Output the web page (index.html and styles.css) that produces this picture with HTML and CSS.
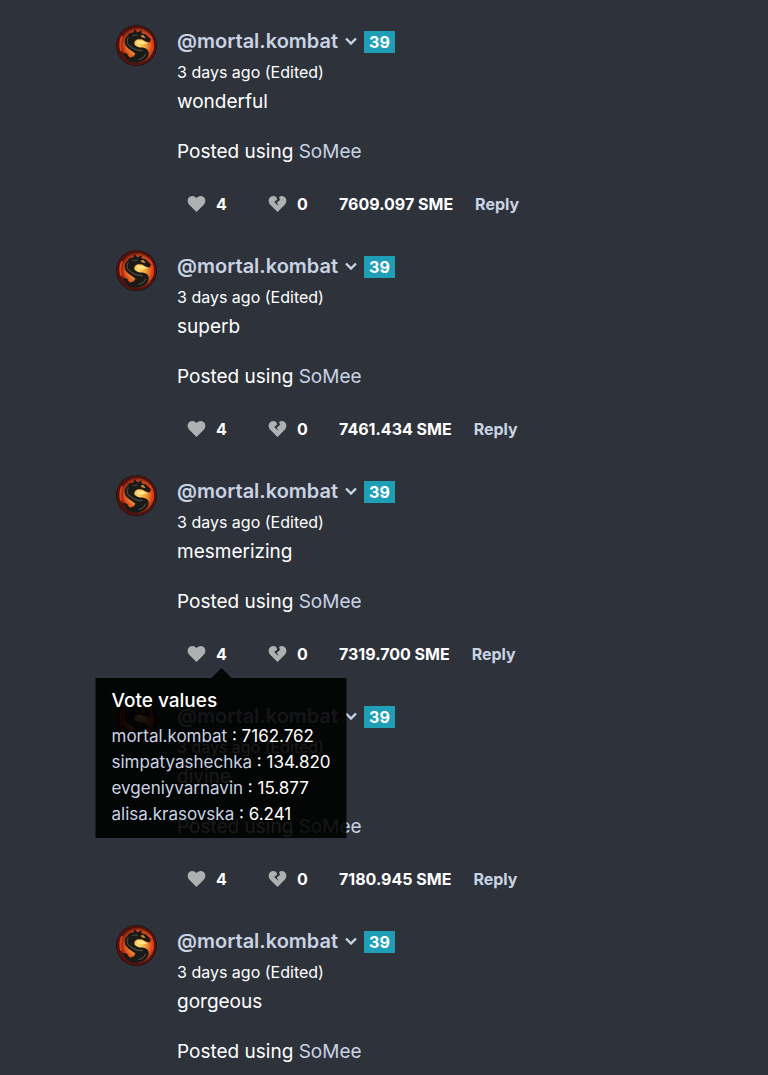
FILE: index.html
```
<!DOCTYPE html>
<html lang="en">
<head>
<meta charset="utf-8">
<meta name="viewport" content="width=device-width, initial-scale=1">
<title>Comments</title>
<link rel="stylesheet" href="styles.css">
</head>
<body>
<svg class="sprite" aria-hidden="true">
  <defs>
    <radialGradient id="fire" cx="55%" cy="50%" r="52%">
      <stop offset="0" stop-color="#ffdf70"/>
      <stop offset=".4" stop-color="#f4a03a"/>
      <stop offset=".75" stop-color="#d9481a"/>
      <stop offset="1" stop-color="#5a120c"/>
    </radialGradient>
  </defs>
  <symbol id="dragon" viewBox="0 0 40 40">
    <circle cx="20" cy="20" r="20" fill="#1f1215"/>
    <circle cx="20" cy="20" r="17.500" fill="url(#fire)"/>
    <circle cx="20" cy="20" r="18.500" fill="none" stroke="#5b130d" stroke-width="1.500"/>
    <path d="M6 11Q3 18 5 25M33 10Q38 18 35 26" fill="none" stroke="#df3b16" stroke-width="2"/>
    <path d="M9 13L13 8L17 7L18 4L21 7L25 5L25 8L29 9L34 14L33 17L29 16L25 14L21 14Q17 16 18 19Q20 22 26 22Q32 23 32 28Q31 34 24 36Q15 39 9 32L6 27Q11 27 13 30L17 31L19 28Q16 26 12 23Q7 19 9 13Z" fill="#191918"/>
    <path d="M20 15L26 15L31 18L25 19L21 18Z" fill="#ffe58a"/>
    <path d="M12 12Q9 18 14 21Q19 25 26 25M22 34Q28 32 29 28M16 10L21 10" fill="none" stroke="#514e3d" stroke-width="1"/>
    <path d="M11 29Q15 28 17 30L14 32Z" fill="#ef5b20"/>
    <path d="M24 10L27 10L29 13L25 12Z" fill="#d98b32"/>
  </symbol>
  <symbol id="heart" viewBox="0 0 18 16">
    <path d="M9 16L1.5 8.400C-.5 6.200-.2 2.700 1.900 1.100C4.100-.6 7-.2 9 2.100C11-.2 13.900-.6 16.100 1.100C18.200 2.700 18.500 6.200 16.500 8.400Z"/>
  </symbol>
  <symbol id="broken" viewBox="0 0 18 16">
    <path d="M9 16L1.500 8.400C-.5 6.200-.2 2.700 1.900 1.100C3.700-.3 6-.3 7.900 1.200L8.700 3.600L5.700 5.900L10 10L8.300 6.500L11.500 4.100L10.600 1C12.400-.4 14.500-.2 16.100 1.100C18.200 2.700 18.500 6.200 16.500 8.400Z"/>
  </symbol>
  <symbol id="chevron" viewBox="0 0 12 8">
    <path d="M1 1.500L6 6.500L11 1.500" fill="none" stroke="currentColor" stroke-width="2.400"/>
  </symbol>
</svg>
<main class="feed">
  <article class="comment">
    <svg class="avatar" role="img" aria-label="mortal.kombat"><use href="#dragon"/></svg>
    <div class="content">
      <header class="author"><a href="#">@mortal.kombat</a><button class="toggle" aria-label="Author menu"><svg><use href="#chevron"/></svg></button><span class="level">39</span></header>
      <div class="date">3 days ago <span class="edited">(Edited)</span></div>
      <p>wonderful</p>
      <p>Posted using <a href="#">SoMee</a></p>
      <footer class="actions">
        <div class="vote"><button aria-label="Like"><svg><use href="#heart"/></svg></button><span class="count">4</span></div>
        <div class="vote down"><button aria-label="Dislike"><svg><use href="#broken"/></svg></button><span class="count">0</span></div>
        <span class="reward">7609.097 SME</span><a href="#">Reply</a>
      </footer>
    </div>
  </article>
  <article class="comment">
    <svg class="avatar" role="img" aria-label="mortal.kombat"><use href="#dragon"/></svg>
    <div class="content">
      <header class="author"><a href="#">@mortal.kombat</a><button class="toggle" aria-label="Author menu"><svg><use href="#chevron"/></svg></button><span class="level">39</span></header>
      <div class="date">3 days ago <span class="edited">(Edited)</span></div>
      <p>superb</p>
      <p>Posted using <a href="#">SoMee</a></p>
      <footer class="actions">
        <div class="vote"><button aria-label="Like"><svg><use href="#heart"/></svg></button><span class="count">4</span></div>
        <div class="vote down"><button aria-label="Dislike"><svg><use href="#broken"/></svg></button><span class="count">0</span></div>
        <span class="reward">7461.434 SME</span><a href="#">Reply</a>
      </footer>
    </div>
  </article>
  <article class="comment">
    <svg class="avatar" role="img" aria-label="mortal.kombat"><use href="#dragon"/></svg>
    <div class="content">
      <header class="author"><a href="#">@mortal.kombat</a><button class="toggle" aria-label="Author menu"><svg><use href="#chevron"/></svg></button><span class="level">39</span></header>
      <div class="date">3 days ago <span class="edited">(Edited)</span></div>
      <p>mesmerizing</p>
      <p>Posted using <a href="#">SoMee</a></p>
      <footer class="actions">
        <div class="vote"><button aria-label="Like"><svg><use href="#heart"/></svg></button><span class="count">4</span>
          <div class="tooltip" role="tooltip">
            <h2>Vote values</h2>
            <ul>
              <li><a href="#">mortal.kombat</a> : 7162.762</li>
              <li><a href="#">simpatyashechka</a> : 134.820</li>
              <li><a href="#">evgeniyvarnavin</a> : 15.877</li>
              <li><a href="#">alisa.krasovska</a> : 6.241</li>
            </ul>
          </div>
        </div>
        <div class="vote down"><button aria-label="Dislike"><svg><use href="#broken"/></svg></button><span class="count">0</span></div>
        <span class="reward">7319.700 SME</span><a href="#">Reply</a>
      </footer>
    </div>
  </article>
  <article class="comment">
    <svg class="avatar" role="img" aria-label="mortal.kombat"><use href="#dragon"/></svg>
    <div class="content">
      <header class="author"><a href="#">@mortal.kombat</a><button class="toggle" aria-label="Author menu"><svg><use href="#chevron"/></svg></button><span class="level">39</span></header>
      <div class="date">3 days ago <span class="edited">(Edited)</span></div>
      <p>divine</p>
      <p>Posted using <a href="#">SoMee</a></p>
      <footer class="actions">
        <div class="vote"><button aria-label="Like"><svg><use href="#heart"/></svg></button><span class="count">4</span></div>
        <div class="vote down"><button aria-label="Dislike"><svg><use href="#broken"/></svg></button><span class="count">0</span></div>
        <span class="reward">7180.945 SME</span><a href="#">Reply</a>
      </footer>
    </div>
  </article>
  <article class="comment">
    <svg class="avatar" role="img" aria-label="mortal.kombat"><use href="#dragon"/></svg>
    <div class="content">
      <header class="author"><a href="#">@mortal.kombat</a><button class="toggle" aria-label="Author menu"><svg><use href="#chevron"/></svg></button><span class="level">39</span></header>
      <div class="date">3 days ago <span class="edited">(Edited)</span></div>
      <p>gorgeous</p>
      <p>Posted using <a href="#">SoMee</a></p>
    </div>
  </article>
</main>
</body>
</html>
```

FILE: styles.css
```
* { box-sizing: border-box; }
body { margin: 0; background: #2d323b; color: #fff; font: 19px/28px Inter, "Liberation Sans", sans-serif; }
a { color: #c9d3e4; text-decoration: none; }
button { padding: 0; border: 0; background: none; color: inherit; cursor: pointer; }
.sprite { position: absolute; width: 0; height: 0; }
.feed { padding: 25px 16px 0 116px; }
.comment { display: flex; gap: 20px; padding-bottom: 30px; }
.comment:last-child { padding-bottom: 0; }
.avatar { flex: none; width: 41px; height: 41px; }
.content { flex: 1; min-width: 0; }
.author { display: flex; align-items: center; height: 32px; font-size: 20px; font-weight: 600; }
.toggle { display: flex; margin: 0 7px; color: #c9d3e4; }
.toggle svg { width: 12px; height: 8px; }
.level { margin-top: 2px; padding: 0 5px; background: #1f9fb5; font-size: 16px; font-weight: 700; line-height: 22px; }
.date { font-size: 16px; line-height: 31px; }
p { margin: 0 0 22px; }
.actions { display: flex; align-items: center; height: 32px; padding-left: 10px; font-size: 16px; font-weight: 700; }
.vote { position: relative; display: flex; align-items: center; width: 81px; gap: 10px; }
.down { width: 71px; }
.vote button { display: flex; color: #aeb0b2; }
.vote svg { width: 19px; height: 16px; fill: currentColor; }
.reward { margin-right: 22px; }
.tooltip { position: absolute; z-index: 1; top: 38px; left: 34px; transform: translateX(-50%); padding: 10px 16px 11px; background: rgba(0, 0, 0, .9); font-size: 17px; font-weight: 400; line-height: 26px; white-space: nowrap; }
.tooltip::before { content: ""; position: absolute; bottom: 100%; left: 50%; margin-left: -10px; border: 10px solid transparent; border-top: 0; border-bottom-color: rgba(0, 0, 0, .9); }
.tooltip h2 { margin: 0 0 9px; font-size: 19px; font-weight: 500; line-height: 26px; }
.tooltip ul { margin: 0; padding: 0; list-style: none; }
```
